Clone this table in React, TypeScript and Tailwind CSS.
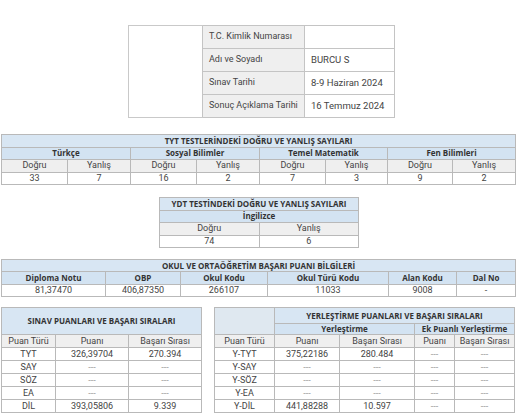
const blue = "bg-[#d8e6f3]";
const gray = "bg-[#efefef]";
const cell = "border border-[#b9b9b9] text-center leading-none p-0";
const head = `${cell} font-['Open_Sans',sans-serif] font-bold text-[8px] text-[#333]`;
const data = `${cell} text-[9px] text-[#444]`;

function InfoTable() {
  const rows = [
    ["T.C. Kimlik Numarası", ""],
    ["Adı ve Soyadı", "BURCU S"],
    ["Sınav Tarihi", "8-9 Haziran 2024"],
    ["Sonuç Açıklama Tarihi", "16 Temmuz 2024"],
  ];
  return (
    <table className="w-[266px] table-fixed border-collapse">
      <colgroup>
        <col className="w-[74px]" />
        <col className="w-[102px]" />
        <col className="w-[90px]" />
      </colgroup>
      <tbody>
        {rows.map(([label, value], i) => (
          <tr key={label} className="h-[23px]">
            {i === 0 && (
              <td rowSpan={4} className="border-y border-l border-[#c9c9c9] bg-white" />
            )}
            <td className={`border border-[#c4c4c4] ${gray} pl-[6px] text-[9px] text-[#444]`}>{label}</td>
            <td className="border border-[#c4c4c4] pl-[6px] text-[9.5px] text-[#444]">{value}</td>
          </tr>
        ))}
      </tbody>
    </table>
  );
}

function TytTable() {
  const subjects = [
    ["Türkçe", "33", "7"],
    ["Sosyal Bilimler", "16", "2"],
    ["Temel Matematik", "7", "3"],
    ["Fen Bilimleri", "9", "2"],
  ];
  return (
    <table className="w-[514px] table-fixed border-collapse">
      <colgroup>
        {[66, 63, 66, 63, 66, 62, 65, 63].map((w, i) => (
          <col key={i} style={{ width: w }} />
        ))}
      </colgroup>
      <tbody>
        <tr className="h-[12.5px]">
          <td colSpan={8} className={`${head} ${blue} text-center`}>TYT TESTLERİNDEKİ DOĞRU VE YANLIŞ SAYILARI</td>
        </tr>
        <tr className="h-[12.5px]">
          {subjects.map(([s]) => (
            <td key={s} colSpan={2} className={`${head} bg-[#d3e3f2]`}>{s}</td>
          ))}
        </tr>
        <tr className="h-[12.5px]">
          {subjects.map(([s]) => [
            <td key={s + "d"} className={`${data} ${gray}`}>Doğru</td>,
            <td key={s + "y"} className={`${data} ${gray}`}>Yanlış</td>,
          ])}
        </tr>
        <tr className="h-[12.5px]">
          {subjects.map(([s, d, y]) => [
            <td key={s + "d"} className={data}>{d}</td>,
            <td key={s + "y"} className={data}>{y}</td>,
          ])}
        </tr>
      </tbody>
    </table>
  );
}

function YdtTable() {
  return (
    <table className="w-[200px] table-fixed border-collapse">
      <tbody>
        <tr className="h-[12.5px]">
          <td colSpan={2} className={`${head} ${blue}`}>YDT TESTİNDEKİ DOĞRU VE YANLIŞ SAYILARI</td>
        </tr>
        <tr className="h-[12.5px]">
          <td colSpan={2} className={`${head} bg-[#d3e3f2]`}>İngilizce</td>
        </tr>
        <tr className="h-[12.5px]">
          <td className={`${data} ${gray}`}>Doğru</td>
          <td className={`${data} ${gray}`}>Yanlış</td>
        </tr>
        <tr className="h-[12.5px]">
          <td className={data}>74</td>
          <td className={data}>6</td>
        </tr>
      </tbody>
    </table>
  );
}

function ObpTable() {
  const cols = [
    ["Diploma Notu", "81,37470", 104],
    ["OBP", "406,87350", 75],
    ["Okul Kodu", "266107", 87],
    ["Okul Türü Kodu", "11033", 121],
    ["Alan Kodu", "9008", 68],
    ["Dal No", "-", 59],
  ] as const;
  return (
    <table className="w-[514px] table-fixed border-collapse">
      <colgroup>
        {cols.map(([h, , w]) => (
          <col key={h} style={{ width: w }} />
        ))}
      </colgroup>
      <tbody>
        <tr className="h-[12px]">
          <td colSpan={6} className={`${head} ${blue}`}>OKUL VE ORTAÖĞRETİM BAŞARI PUANI BİLGİLERİ</td>
        </tr>
        <tr className="h-[12.5px]">
          {cols.map(([h]) => (
            <td key={h} className={`${head} bg-[#d3e3f2]`}>{h}</td>
          ))}
        </tr>
        <tr className="h-[12.5px]">
          {cols.map(([h, v]) => (
            <td key={h} className={data}>{v}</td>
          ))}
        </tr>
      </tbody>
    </table>
  );
}

function SinavTable() {
  const rows = [
    ["TYT", "326,39704", "270.394"],
    ["SAY", "---", "---"],
    ["SÖZ", "---", "---"],
    ["EA", "---", "---"],
    ["DİL", "393,05806", "9.339"],
  ];
  return (
    <table className="w-[200px] table-fixed border-collapse">
      <colgroup>
        <col className="w-[54px]" />
        <col className="w-[73px]" />
        <col className="w-[73px]" />
      </colgroup>
      <tbody>
        <tr className="h-[27px]">
          <td colSpan={3} className={`${head} ${blue}`}>SINAV PUANLARI VE BAŞARI SIRALARI</td>
        </tr>
        <tr className="h-[13px]">
          <td className={`${data} ${gray}`}>Puan Türü</td>
          <td className={`${data} ${gray}`}>Puanı</td>
          <td className={`${data} ${gray}`}>Başarı Sırası</td>
        </tr>
        {rows.map(([t, p, s]) => (
          <tr key={t} className="h-[13px]">
            <td className={`${data} text-[9.5px] text-[#333]`}>{t}</td>
            <td className={`${data} ${p === "---" ? "text-[#999] text-[7px]" : ""}`}>{p}</td>
            <td className={`${data} ${s === "---" ? "text-[#999] text-[7px]" : ""}`}>{s}</td>
          </tr>
        ))}
      </tbody>
    </table>
  );
}

function YerlestirmeTable() {
  const rows = [
    ["Y-TYT", "375,22186", "280.484"],
    ["Y-SAY", "---", "---"],
    ["Y-SÖZ", "---", "---"],
    ["Y-EA", "---", "---"],
    ["Y-DİL", "441,88288", "10.597"],
  ];
  const dash = "text-[#999] text-[7px]";
  return (
    <table className="w-[300px] table-fixed border-collapse">
      <colgroup>
        <col className="w-[60px]" />
        <col className="w-[65px]" />
        <col className="w-[75px]" />
        <col className="w-[40px]" />
        <col className="w-[60px]" />
      </colgroup>
      <tbody>
        <tr className="h-[16px]">
          <td rowSpan={2} className={`${cell} bg-[#dfe8f0]`} />
          <td colSpan={4} className={`${head} ${blue}`}>YERLEŞTİRME PUANLARI VE BAŞARI SIRALARI</td>
        </tr>
        <tr className="h-[11px]">
          <td colSpan={2} className={`${head} bg-[#d3e3f2]`}>Yerleştirme</td>
          <td colSpan={2} className={`${head} bg-[#d3e3f2]`}>Ek Puanlı Yerleştirme</td>
        </tr>
        <tr className="h-[13px]">
          {["Puan Türü", "Puanı", "Başarı Sırası", "Puanı", "Başarı Sırası"].map((h, i) => (
            <td key={i} className={`${data} ${gray}`}>{h}</td>
          ))}
        </tr>
        {rows.map(([t, p, s]) => (
          <tr key={t} className="h-[13px]">
            <td className={`${data} text-[9.5px] text-[#333]`}>{t}</td>
            <td className={`${data} ${p === "---" ? dash : ""}`}>{p}</td>
            <td className={`${data} ${s === "---" ? dash : ""}`}>{s}</td>
            <td className={`${data} ${dash}`}>---</td>
            <td className={`${data} ${dash}`}>---</td>
          </tr>
        ))}
      </tbody>
    </table>
  );
}

export default function App() {
  return (
    <div className="w-[521px] h-[418px] overflow-hidden bg-white font-['Roboto',sans-serif] pt-[25px]">
      <div className="pl-[128px]">
        <InfoTable />
      </div>
      <div className="mt-[16px] pl-[1px]">
        <TytTable />
      </div>
      <div className="mt-[12px] pl-[159px]">
        <YdtTable />
      </div>
      <div className="mt-[11px] pl-[1px]">
        <ObpTable />
      </div>
      <div className="mt-[10px] flex pl-[1px] gap-[12px]">
        <SinavTable />
        <YerlestirmeTable />
      </div>
    </div>
  );
}
